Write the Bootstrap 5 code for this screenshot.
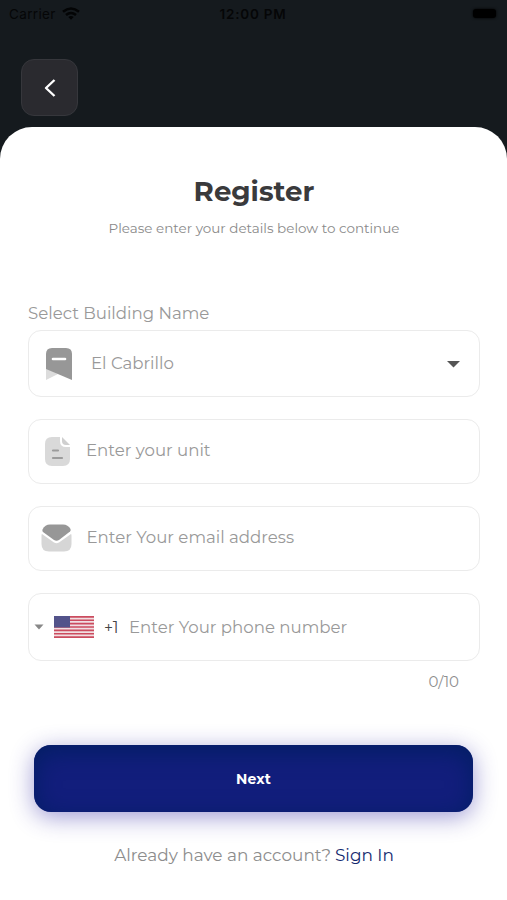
<!DOCTYPE html>
<html lang="en">
<head>
<meta charset="utf-8">
<meta name="viewport" content="width=device-width, initial-scale=1">
<title>Register</title>
<link href="https://cdn.jsdelivr.net/npm/bootstrap@5.3.0/dist/css/bootstrap.min.css" rel="stylesheet">
<style>
  body { background: #151a1e; font-family: Montserrat, Inter, sans-serif; color: #999; height: 900px; overflow: hidden; }
  .t { white-space: nowrap; line-height: 20px; display: inline-block; }
  .statusbar { height: 28px; color: #050607; font-family: Inter, sans-serif; font-size: 13.5px; padding: 0 10px 0 9px; }
  .statusbar > div { flex: 1 1 0; }
  .s-carrier { letter-spacing: .35px; }
  .s-time { letter-spacing: .75px; }
  .wifi { margin-left: 6px; margin-bottom: 2px; }
  .battery { width: 23px; height: 9px; border-radius: 3px; background: #000; box-shadow: 0 0 3px #000; margin-right: 1px; margin-bottom: 1px; }
  .back { width: 57px; height: 57px; margin: 31px 0 11px 21px; border-radius: 13px; background: #2a2a2f; border: 1.5px solid #36373c; }
  .sheet { height: 773px; border-radius: 32px 32px 0 0; padding: 0 27px 0 28px; }
  .title { font-size: 27.6px; line-height: 34px; color: #3a3a3c; padding-top: 47px; }
  .subtitle { font-size: 13.5px; margin-top: 10px; color: #8a8a8a; }
  .caption { margin-top: 65px; font-size: 16.6px; }
  .field { border: 1.5px solid #ebebeb; border-radius: 13px; height: 65px; margin-bottom: 22px; font-size: 16.6px; }
  .field-select { height: 67px; margin-top: 7px; }
  .field-phone { height: 68px; margin-bottom: 10px; }
  .s-cab { margin-left: 18px; padding-bottom: 1px; }
  .s-unit, .s-mail { margin-left: 15px; padding-bottom: 3px; line-height: 22px; }
  .s-mail { margin-left: 14.5px; }
  .flag { margin-left: 9px; }
  .mail-icon { margin: 0 0 2px 12px; }
  .s-code { margin-left: 10px; width: 25px; color: #444; font-size: 15.8px; padding-top: 1px; }
  .counter { font-size: 15px; padding-right: 21px; color: #8f8f8f; }
  .next { height: 67px; margin: 51px 7px 0 6px; border: 0; border-radius: 17px; color: #fff; font-size: 14px; padding-top: 3px;
    background: #121e7c; box-shadow: inset 0 6px 24px #021e63, 0 5px 23px rgba(55, 45, 165, .48); }
  .s-next { letter-spacing: .2px; }
  .signin { margin-top: 33px; font-size: 16.9px; color: #8d8d8d; }
  .signin a { color: #14296f; }
</style>
</head>
<body>
<header>
  <div class="statusbar d-flex align-items-center">
    <div class="d-flex align-items-center">
      <span class="t s-carrier">Carrier</span>
      <svg class="wifi" width="18" height="13" viewBox="0 0 18 13" fill="none" stroke="#030405" stroke-width="2.6"><path d="M1 4.8Q9-1.8 17 4.8M4 8Q9 4 14 8"/><path d="M9 12.8 6.3 10Q9 8 11.7 10Z" fill="#030405" stroke="none"/></svg>
    </div>
    <span class="t s-time fw-semibold">12:00 PM</span>
    <div class="d-flex justify-content-end"><span class="battery"></span></div>
  </div>
  <button class="back d-flex align-items-center justify-content-center p-0" aria-label="Back">
    <svg width="14" height="20" viewBox="0 0 14 20" fill="none" stroke="#fff" stroke-width="2.4" stroke-linejoin="round"><path d="M11.500 2 3 10l8.500 8"/></svg>
  </button>
</header>
<main class="sheet bg-white">
  <div class="text-center">
    <h1 class="title fw-bold mb-0">Register</h1>
    <div class="subtitle"><span class="t">Please enter your details below to continue</span></div>
  </div>
  <div class="caption d-flex"><span class="t">Select Building Name</span></div>
  <div class="field field-select d-flex align-items-center">
    <svg class="ms-3" width="28" height="34" viewBox="0 0 28 34"><path d="M1 21v12l12-6z" fill="#dcdcdc"/><path d="M1 22V7q0-6 6-6h14q6 0 6 6v26z" fill="#979797"/><path d="M8 12h12" stroke="#fff" stroke-width="2.6" stroke-linecap="round"/></svg>
    <span class="t s-cab">El Cabrillo</span>
    <svg class="ms-auto" width="17" height="8" viewBox="0 0 17 8" style="margin-right:17px"><path d="M2 1h13L8.500 7.500z" fill="#555"/></svg>
  </div>
  <div class="field d-flex align-items-center">
    <svg class="ms-3" width="26" height="31" viewBox="0 0 26 31"><path d="M7 1h8v4q0 6 6 6h4v12q0 7-7 7H7q-7 0-7-7V8q0-7 7-7z" fill="#d9d9d9"/><path d="M17 1l8 8h-4q-4 0-4-4z" fill="#cfcfcf"/><path d="M8 14.500h5M8 22h9" stroke="#9b9b9b" stroke-width="2.2" stroke-linecap="round"/></svg>
    <span class="t s-unit">Enter your unit</span>
  </div>
  <div class="field d-flex align-items-center">
    <svg class="mail-icon" width="31" height="28" viewBox="0 0 31 28"><path d="M1 10 13 18.500q2.500 1.500 5 0L30 10q.500 0 .500 2v8q0 7.500-7.500 7.500H8q-7.500 0-7.500-7.500v-8q0-2 .500-2z" fill="#d6d6d6"/><path d="M9 .500h13q5 0 7.500 4.500.500 1.500-.500 2.500l-11 8.500q-2.500 1.500-5 0L2 8Q1 7 1.500 5.500 4 .500 9 .500z" fill="#979797"/></svg>
    <span class="t s-mail">Enter Your email address</span>
  </div>
  <div class="field field-phone d-flex align-items-center">
    <svg class="ms-1" width="12" height="6" viewBox="0 0 12 6"><path d="M1.500.500h9L6 5.500z" fill="#888"/></svg>
    <svg class="flag" width="40" height="22" viewBox="0 0 40 22"><path fill="#f1dfe2" d="M0 0h40v22H0z"/><path d="M0 .850h40M0 4.230h40M0 7.610h40M0 11h40M0 14.390h40M0 17.770h40M0 21.150h40" stroke="#cb4c5f" stroke-width="1.690"/><path fill="#53538a" d="M0 0h16v11.500H0z"/></svg>
    <span class="t s-code">+1</span>
    <span class="t">Enter Your phone number</span>
  </div>
  <div class="counter text-end"><span class="t">0/10</span></div>
  <div class="d-grid"><button class="next fw-bold"><span class="t s-next">Next</span></button></div>
  <div class="signin d-flex justify-content-center gap-1"><span class="t">Already have an account?</span><a href="#" class="t text-decoration-none">Sign In</a></div>
</main>
<script src="https://cdn.jsdelivr.net/npm/bootstrap@5.3.0/dist/js/bootstrap.bundle.min.js"></script>
</body>
</html>
